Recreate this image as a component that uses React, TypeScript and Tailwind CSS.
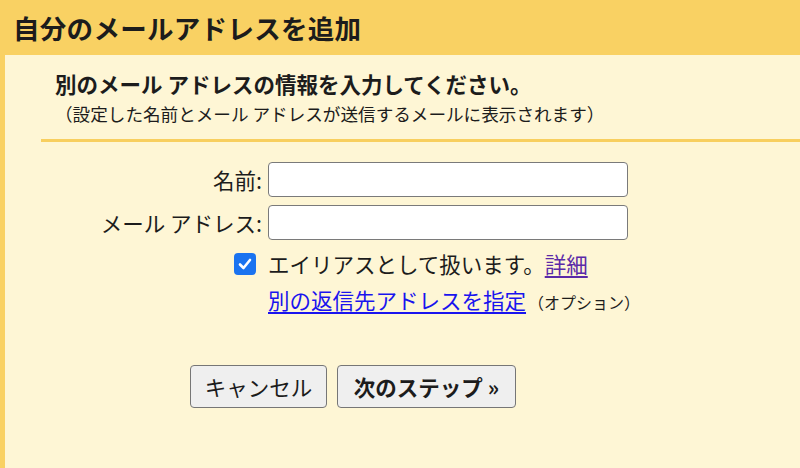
import React from "react";

const font = { fontFamily: '"Noto Sans CJK JP", "Noto Sans", sans-serif' };

export default function App() {
  return (
    <div className="w-[800px] h-[468px] flex flex-col bg-[#fef6d5] text-[#1c1c1c] overflow-hidden" style={font}>
      <div className="h-[55px] shrink-0 bg-[#f9d163] flex items-center pl-[13px]">
        <h1 className="text-[26.5px] leading-[32px] font-bold tracking-[0.3px]">自分のメールアドレスを追加</h1>
      </div>
      <div className="flex-1 flex flex-col border-l-[5px] border-[#f9d163]">
        <div className="pl-[50px] pt-[15px] flex flex-col">
          <p className="text-[21.5px] leading-[28px] font-bold">別のメール アドレスの情報を入力してください。</p>
          <p className="text-[17.6px] leading-[24px] mt-[4px]">（設定した名前とメール アドレスが送信するメールに表示されます）</p>
        </div>
        <div className="ml-[36px] mt-[13px] h-[3px] bg-[#f8cf5f]" />
        <div className="mt-[20px] grid grid-cols-[257px_360px] gap-x-[6px] items-center">
          <label className="justify-self-end text-[21.5px] leading-[28px]">名前:</label>
          <input className="h-[35px] w-[360px] bg-white border-[1.5px] border-[#7a7a7a] rounded-[4px]" />
          <label className="justify-self-end text-[21.5px] leading-[28px] mt-[8px]">メール アドレス:</label>
          <input className="h-[35px] w-[360px] bg-white border-[1.5px] border-[#7a7a7a] rounded-[4px] mt-[8px]" />
          <div className="justify-self-end mr-[6px] mt-[10px] w-[22px] h-[22px] rounded-[4px] bg-[#1a73f0] flex items-center justify-center">
            <svg width="16" height="16" viewBox="0 0 16 16">
              <path d="M3 8.5 L6.5 12 L13 4" fill="none" stroke="white" strokeWidth="2.6" strokeLinecap="round" strokeLinejoin="round" />
            </svg>
          </div>
          <div className="mt-[10px] text-[21.5px] leading-[28px] whitespace-nowrap">
            エイリアスとして扱います。<a href="#" className="text-[#5b2aa8] underline underline-offset-[3px]">詳細</a>
          </div>
          <div />
          <div className="mt-[8px] text-[21.5px] leading-[28px] whitespace-nowrap">
            <a href="#" className="text-[#1a14ee] underline underline-offset-[3px]">別の返信先アドレスを指定</a>
            <span className="text-[16px] ml-[2px]">（オプション）</span>
          </div>
        </div>
        <div className="mt-[49px] ml-[185px] flex gap-[10px]">
          <button className="w-[137px] h-[43px] bg-[#efefef] border-[1.5px] border-[#767676] rounded-[4px] text-[21.5px] leading-[28px] flex items-center justify-center">キャンセル</button>
          <button className="w-[179px] h-[43px] bg-[#efefef] border-[1.5px] border-[#767676] rounded-[4px] text-[21.5px] leading-[28px] font-bold flex items-center justify-center">次のステップ »</button>
        </div>
      </div>
    </div>
  );
}
